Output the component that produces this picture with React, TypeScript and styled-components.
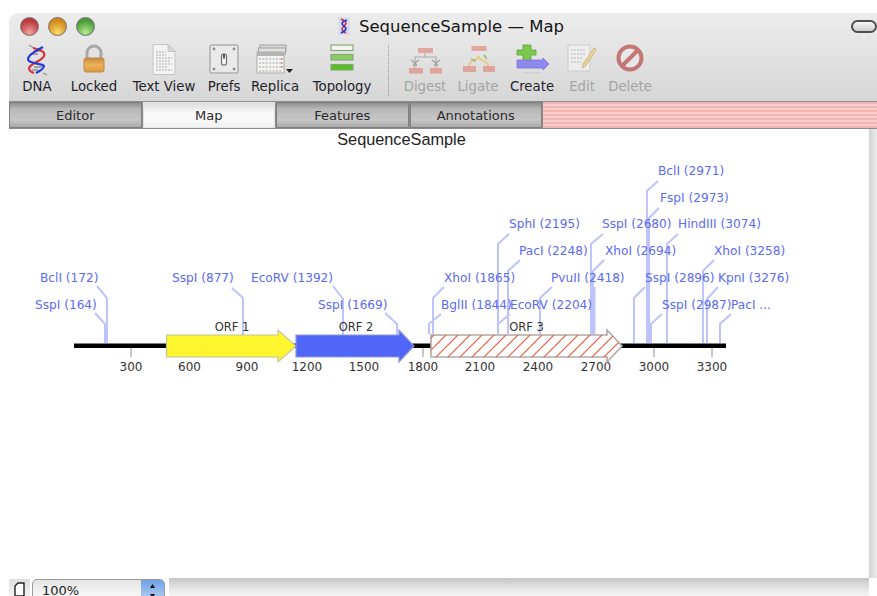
import React from "react";
import styled, { createGlobalStyle } from "styled-components";

const UI_FONT = `"DejaVu Sans", "Noto Sans", sans-serif`;

const GlobalStyle = createGlobalStyle`
  html, body {
    margin: 0;
    padding: 0;
    background: #fff;
  }
`;

const Page = styled.div`
  width: 877px;
  height: 596px;
  padding: 13px 0 0 9px;
  box-sizing: border-box;
  overflow: hidden;
  background: #fff;
  font-family: ${UI_FONT};
`;

const Window = styled.div`
  height: 583px;
  display: flex;
  flex-direction: column;
  border-top-left-radius: 9px;
  overflow: hidden;
`;

const TitleBar = styled.div`
  height: 29px;
  padding-bottom: 3px;
  box-sizing: border-box;
  display: grid;
  grid-template-columns: 86px 1fr 26px;
  align-items: center;
  background: linear-gradient(#ececec, #e6e6e6);
`;

const Lights = styled.div`
  display: flex;
  gap: 9px;
  padding-left: 11px;
`;

const Light = styled.span<{ $hue: string; $glow: string }>`
  width: 19px;
  height: 19px;
  border-radius: 50%;
  box-sizing: border-box;
  border: 1px solid #77706c;
  background: radial-gradient(circle at 50% 85%, ${(p) => p.$glow}, ${(p) => p.$hue} 70%);
`;

const Title = styled.div`
  display: flex;
  align-items: center;
  justify-content: center;
  gap: 9px;
  padding-right: 44px;
  font-size: 16.5px;
  color: #151515;
  white-space: nowrap;
`;

const ZoomPill = styled.span`
  height: 13px;
  border: 2px solid #4e4e4e;
  border-radius: 7px;
  box-sizing: border-box;
  background: linear-gradient(#f6f6f6, #cfcfcf);
`;

const Toolbar = styled.div`
  height: 59px;
  display: flex;
  padding-left: 5px;
  background: linear-gradient(#e6e6e6, #d6d6d6);
  border-bottom: 1px solid #8e8e8e;
  box-sizing: content-box;
`;

const ToolItem = styled.div<{ $width: number; $dim?: boolean }>`
  width: ${(p) => p.$width}px;
  display: flex;
  flex-direction: column;
  align-items: center;
  font-size: 13.3px;
  color: ${(p) => (p.$dim ? "#a4a4a4" : "#1f1f2a")};
  white-space: nowrap;
`;

const ToolIcon = styled.div<{ $dim?: boolean }>`
  height: 36px;
  padding-top: 2px;
  box-sizing: border-box;
  opacity: ${(p) => (p.$dim ? 0.6 : 1)};
`;

const ToolLabel = styled.span`
  line-height: 18px;
`;

const ToolDivider = styled.div`
  width: 0;
  margin: 3px 6px 5px;
  border-left: 1px dotted #9a9a9a;
`;

const TabRow = styled.div`
  height: 26px;
  display: flex;
  gap: 1px;
  background: #8c8c8c;
  border-bottom: 1px solid #8c8c8c;
  box-sizing: content-box;
`;

const Tab = styled.div<{ $active?: boolean }>`
  width: 132.5px;
  display: flex;
  align-items: center;
  justify-content: center;
  font-size: 13px;
  color: #2a2a2a;
  box-sizing: border-box;
  border: 1px solid ${(p) => (p.$active ? "#e4e4e4" : "#7f7f7f")};
  background: ${(p) =>
    p.$active
      ? "linear-gradient(#dcdcdc, #fbfbfb 45%, #f2f2f2)"
      : "linear-gradient(#8f8f8f, #b8b8b8 25%, #c6c6c6 70%, #a9a9a9)"};
`;

const TabFiller = styled.div`
  flex: 1;
  background: repeating-linear-gradient(#f3b4b4 0 2px, #f9cdcd 2px 4px);
`;

const Body = styled.div`
  flex: 1;
  display: flex;
  min-height: 0;
`;

const Canvas = styled.div`
  flex: 1;
  background: #fff;
`;

const MapSvg = styled.svg`
  display: block;
`;

const ScrollTrack = styled.div`
  width: 8px;
  background: linear-gradient(90deg, #d2d2d2, #ececec);
`;

const Footer = styled.div`
  height: 18px;
  display: flex;
  background: #fff;
`;

const PageButton = styled.div`
  width: 21px;
  height: 18px;
  margin-top: 1px;
  display: flex;
  justify-content: center;
  padding-top: 3px;
  box-sizing: border-box;
  background: linear-gradient(#dedede, #f4f4f4);
`;

const ZoomSelect = styled.div`
  width: 133px;
  height: 24px;
  margin: 1px 0 0 2px;
  display: flex;
  box-sizing: border-box;
  border: 1px solid #9c9c9c;
  border-radius: 5px;
  overflow: hidden;
  background: linear-gradient(#e4e4e4, #ffffff);
`;

const ZoomValue = styled.span`
  flex: 1;
  padding: 3px 0 0 9px;
  font-size: 13px;
  color: #222;
`;

const ZoomStepper = styled.span`
  width: 23px;
  display: flex;
  justify-content: center;
  padding-top: 3px;
  box-sizing: border-box;
  background: linear-gradient(#6f9fe6, #bcd6f5);
`;

const HScrollTrack = styled.div`
  flex: 1;
  margin-left: 4px;
  background: linear-gradient(#c4c4c4, #e6e6e6 60%, #f6f6f6);
`;

const CornerGap = styled.div`
  width: 8px;
`;

const DnaIcon = () => (
  <svg width="22" height="32" viewBox="0 0 22 32">
    <path d="M3 1l5 3M17 29l4 2M8 7h8M6 10h6M8 23h8M6 26h6" stroke="#8f8f8f" strokeWidth="1.3" />
    <path d="M7 4C12 5 20 7 18 12S5 19 3 24c0 2 2 4 5 5" fill="none" stroke="#d8323a" strokeWidth="2.1" />
    <path d="M17 3C12 6 2 10 2 15s14 4 16 7c0 3-4 5-8 7" fill="none" stroke="#2438d8" strokeWidth="2.1" />
  </svg>
);

const LockIcon = () => (
  <svg width="22" height="29" viewBox="0 0 22 29">
    <defs>
      <linearGradient id="lockBody" x1="0" y1="0" x2="0" y2="1">
        <stop offset="0" stopColor="#c98a3a" />
        <stop offset="0.5" stopColor="#eeb25c" />
        <stop offset="1" stopColor="#d9983f" />
      </linearGradient>
    </defs>
    <path d="M4 14V9a7 7 0 0 1 14 0v5" fill="none" stroke="#a8a8a8" strokeWidth="3" />
    <rect x="1" y="14" width="20" height="14" rx="2" fill="url(#lockBody)" stroke="#c08a48" />
  </svg>
);

const TextDocIcon = () => (
  <svg width="24" height="31" viewBox="0 0 24 31">
    <path d="M1 .5h15l7 7v23H1z" fill="#f3f3f3" stroke="#c4c4c4" />
    <path d="M16 .5v7h7z" fill="#d6d6d6" stroke="#c4c4c4" />
    <path
      d="M4 8h10M4 11h10M4 14h16M4 17h14M4 20h16M4 23h12M4 26h16"
      stroke="#ababab"
      strokeDasharray="2 1"
    />
  </svg>
);

const PrefsIcon = () => (
  <svg width="30" height="30" viewBox="0 0 30 30">
    <rect x="1" y="1" width="28" height="28" rx="2" fill="#e9e9e9" stroke="#b0b0b0" strokeWidth="1.6" />
    <g fill="#8d8d8d">
      <circle cx="5" cy="5" r="1.400" />
      <circle cx="25" cy="5" r="1.400" />
      <circle cx="5" cy="25" r="1.400" />
      <circle cx="25" cy="25" r="1.400" />
    </g>
    <rect x="12.500" y="10" width="5" height="11" rx="2" fill="#f6f6f6" stroke="#6e6e6e" strokeWidth="1.2" />
    <rect x="14" y="10" width="2" height="4.500" fill="#555" />
  </svg>
);

const ReplicaIcon = () => (
  <svg width="38" height="30" viewBox="0 0 38 30">
    <rect x="4" y="1" width="26" height="6" fill="#d6d6d6" stroke="#a2a2a2" />
    <rect x="2.500" y="4" width="27" height="6" fill="#e0e0e0" stroke="#a2a2a2" />
    <rect x="1" y="8" width="27" height="21" fill="#f4f4ea" stroke="#ababab" />
    <rect x="1" y="8" width="27" height="4" fill="#b4b4b4" />
    <path d="M3 15h23M3 19h23M3 23h23M3 27h23" stroke="#9aa0d4" strokeDasharray="2 1.400" />
    <path d="M25 15h2M25 19h2M25 23h2" stroke="#d06a6a" />
    <path d="M30 25h7l-3.500 4z" fill="#222" />
  </svg>
);

const TopologyIcon = () => (
  <svg width="24" height="28" viewBox="0 0 24 28">
    <rect x="1" y="1" width="22" height="5.500" fill="#f6f8f0" stroke="#86a876" strokeWidth="1.2" />
    <rect x="1" y="10.500" width="22" height="5.500" fill="#8ccc66" stroke="#86a876" strokeWidth="1.2" />
    <rect x="1" y="20.500" width="22" height="5.500" fill="#55c022" stroke="#86a876" strokeWidth="1.2" />
  </svg>
);

const DigestIcon = () => (
  <svg width="33" height="32" viewBox="0 0 33 32">
    <g fill="#e07f6e">
      <rect x="9" y="4" width="15" height="5" />
      <rect x="0" y="24" width="14" height="5.500" />
      <rect x="21" y="24" width="12" height="5.500" />
    </g>
    <path d="M16 9v4M6 24v-11h21v11" fill="none" stroke="#8a8a8a" strokeWidth="1.1" />
    <path d="M2 16l4 3 4-3M23 16l4 3 4-3M4 22l2-3 2 3M25 22l2-3 2 3" fill="none" stroke="#7a7a7a" strokeWidth="1.3" />
  </svg>
);

const LigateIcon = () => (
  <svg width="33" height="30" viewBox="0 0 33 30">
    <g fill="#e07f6e">
      <rect x="9.500" y="2" width="15" height="5" />
      <rect x="1" y="22" width="13" height="6" />
      <rect x="21" y="22" width="12" height="6" />
    </g>
    <path d="M7 22c0-7 9-5 10-10M26 22c0-7-9-4-10-10" fill="none" stroke="#e8c04a" strokeWidth="2.200" />
    <path d="M9 15l5 2M22 11l3 4" stroke="#5aa84a" strokeWidth="1.800" />
  </svg>
);

const CreateIcon = () => (
  <svg width="34" height="30" viewBox="0 0 34 30">
    <path d="M8 1h8v5h5v5h-5v6H8v-6H2V6h6z" fill="#7cc84e" stroke="#5aa436" strokeWidth="0.800" />
    <path d="M2 16h26v-2l6 6-6 6v-2H2z" fill="#8f88ee" stroke="#7a74d4" strokeWidth="0.800" />
    <rect x="8" y="28" width="17" height="1.500" fill="#cfcfcf" />
  </svg>
);

const EditIcon = () => (
  <svg width="31" height="28" viewBox="0 0 31 28">
    <path d="M1 1h22v26H1z" fill="#f6f6f6" stroke="#bbb" />
    <path d="M4 6h14M4 10h14M4 14h12M4 18h10" stroke="#999" strokeDasharray="2 1" />
    <path d="M27 4l2.500 1.500-11 16.500-3 2 .5-4z" fill="#f0c860" stroke="#b89238" strokeWidth="0.800" />
  </svg>
);

const DeleteIcon = () => (
  <svg width="28" height="28" viewBox="0 0 28 28">
    <circle cx="14" cy="14" r="11.500" fill="#ececec" stroke="#b03030" strokeWidth="4" />
    <path d="M6 22L22 6" stroke="#b03030" strokeWidth="4" />
  </svg>
);

const TITLE_DNA = (
  <svg width="12" height="18" viewBox="0 0 12 18">
    <rect width="12" height="18" fill="#d9dcec" />
    <path d="M3 2c6 3 6 4 3 7s-3 4 2 7" fill="none" stroke="#d8323a" strokeWidth="1.600" />
    <path d="M9 3C3 5 3 7 6 9s3 4-3 7" fill="none" stroke="#2438d8" strokeWidth="1.600" />
  </svg>
);

const PRIMARY_TOOLS = [
  { label: "DNA", width: 46, Icon: DnaIcon },
  { label: "Locked", width: 68, Icon: LockIcon },
  { label: "Text View", width: 72, Icon: TextDocIcon },
  { label: "Prefs", width: 48, Icon: PrefsIcon },
  { label: "Replica", width: 54, Icon: ReplicaIcon },
  { label: "Topology", width: 80, Icon: TopologyIcon },
];

const EDIT_TOOLS = [
  { label: "Digest", width: 60, Icon: DigestIcon, dim: true },
  { label: "Ligate", width: 46, Icon: LigateIcon, dim: true },
  { label: "Create", width: 62, Icon: CreateIcon, dim: false },
  { label: "Edit", width: 38, Icon: EditIcon, dim: true },
  { label: "Delete", width: 58, Icon: DeleteIcon, dim: true },
];

const TABS = ["Editor", "Map", "Features", "Annotations"];

// name, label start x, label baseline y, leader line points
const SITES: [string, number, number, string][] = [
  ["BclI (172)", 40, 281, "97,285 107,297 107,342"],
  ["SspI (164)", 35, 308, "95,312 105,323 105,342"],
  ["SspI (877)", 172, 281, "232,287 243,297 243,334"],
  ["EcoRV (1392)", 251, 281, "333,285 343,298 343,334"],
  ["SspI (1669)", 318, 308, "385,312 397,323 397,334"],
  ["BclI (2971)", 658, 174, "658,180 647,190 647,342"],
  ["FspI (2973)", 660, 201, "659,207 649,217 649,342"],
  ["SphI (2195)", 509, 227, "509,233 498,243 498,333"],
  ["SspI (2680)", 602, 227, "603,233 591,243 591,333"],
  ["HindIII (3074)", 678, 227, "678,233 667,243 667,342"],
  ["PacI (2248)", 519, 254, "520,259 508,270 508,333"],
  ["XhoI (2694)", 605, 254, "604,259 593,270 593,333"],
  ["XhoI (3258)", 714, 254, "714,259 703,270 703,342"],
  ["XhoI (1865)", 444, 281, "444,286 433,297 433,333"],
  ["PvuII (2418)", 551, 281, "552,286 540,297 540,333"],
  ["SspI (2896)", 645, 281, "645,286 634,297 634,342"],
  ["KpnI (3276)", 718, 281, "718,286 707,298 707,342"],
  ["BglII (1844)", 441, 308, "441,313 429,323 429,333"],
  ["EcoRV (2204)", 510, 308, "510,313 498,323 498,333"],
  ["SspI (2987)", 662, 308, "662,313 651,323 651,342"],
  ["PacI ...", 731, 308, "731,313 720,323 720,342"],
];

const TICKS: [string, number][] = [
  ["300", 131],
  ["600", 189.5],
  ["900", 247],
  ["1200", 307],
  ["1500", 364],
  ["1800", 423],
  ["2100", 480],
  ["2400", 538],
  ["2700", 596],
  ["3000", 654],
  ["3300", 712],
];

// arrow from x0 to tip, with the head starting at neck
const arrowPoints = (x0: number, neck: number, tip: number) =>
  `${x0},334 ${neck},334 ${neck},329 ${tip},345 ${neck},361 ${neck},356 ${x0},356`;

const SequenceMap = () => (
  <MapSvg width="860" height="450" viewBox="9 128 860 450">
    <defs>
      <pattern id="orfHatch" width="12" height="12" patternUnits="userSpaceOnUse">
        <path d="M-1 13L13 -1" stroke="#ec5a40" strokeWidth="1.2" />
        <path d="M-4 4L4 -4M8 16L16 8" stroke="#ec5a40" strokeWidth="1.2" />
      </pattern>
    </defs>

    <text x="401.500" y="143.500" textAnchor="middle" fontFamily="Liberation Sans, sans-serif" fontSize="16.300" fill="#222">
      SequenceSample
    </text>

    <rect x="74" y="342.500" width="652" height="4.500" fill="#000" />

    <g stroke="#b5b5b5" strokeWidth="1.5">
      {TICKS.map(([, x]) => (
        <line key={x} x1={x} y1="347" x2={x} y2="356" />
      ))}
    </g>

    <g fontFamily="DejaVu Sans, sans-serif" fontSize="12" fill="#333" textAnchor="middle">
      {TICKS.map(([label, x]) => (
        <text key={label} x={x} y="369.500">
          {label}
        </text>
      ))}
    </g>

    <g fill="none" stroke="#bcc4fb" strokeWidth="2">
      {SITES.map(([name, , , leader]) => (
        <polyline key={name} points={leader} />
      ))}
      <path d="M594.500 286v47" />
    </g>

    <polygon points={arrowPoints(166.500, 278, 296)} fill="#fdf52e" stroke="#c4c4a0" strokeWidth="1.2" />
    <polygon points={arrowPoints(296, 399, 414)} fill="#4f66f7" stroke="#8d98d8" strokeWidth="1.2" />
    <polygon points={arrowPoints(431, 607, 622)} fill="#fff" stroke="#b0aaa6" strokeWidth="1.6" />
    <polygon points={arrowPoints(431, 607, 622)} fill="url(#orfHatch)" stroke="none" />

    <g fontFamily="DejaVu Sans, sans-serif" fontSize="11.500" fill="#333" textAnchor="middle">
      <text x="232" y="330">ORF 1</text>
      <text x="356" y="330">ORF 2</text>
      <text x="526.500" y="330">ORF 3</text>
    </g>

    <g fontFamily="DejaVu Sans, sans-serif" fontSize="12.150" fill="#5a6bf5">
      {SITES.map(([name, x, y]) => (
        <text key={name} x={x} y={y}>
          {name}
        </text>
      ))}
    </g>
  </MapSvg>
);

export default function App() {
  return (
    <Page>
      <GlobalStyle />
      <Window>
        <TitleBar>
          <Lights>
            <Light $hue="#b8383c" $glow="#f5a0a0" />
            <Light $hue="#d08a1c" $glow="#fbdc6a" />
            <Light $hue="#4c9a3a" $glow="#b4ec94" />
          </Lights>
          <Title>
            {TITLE_DNA}
            SequenceSample — Map
          </Title>
          <ZoomPill />
        </TitleBar>

        <Toolbar>
          {PRIMARY_TOOLS.map(({ label, width, Icon }) => (
            <ToolItem key={label} $width={width}>
              <ToolIcon>
                <Icon />
              </ToolIcon>
              <ToolLabel>{label}</ToolLabel>
            </ToolItem>
          ))}
          <ToolDivider />
          {EDIT_TOOLS.map(({ label, width, Icon, dim }) => (
            <ToolItem key={label} $width={width} $dim={dim}>
              <ToolIcon $dim={dim}>
                <Icon />
              </ToolIcon>
              <ToolLabel>{label}</ToolLabel>
            </ToolItem>
          ))}
        </Toolbar>

        <TabRow>
          {TABS.map((tab) => (
            <Tab key={tab} $active={tab === "Map"}>
              {tab}
            </Tab>
          ))}
          <TabFiller />
        </TabRow>

        <Body>
          <Canvas>
            <SequenceMap />
          </Canvas>
          <ScrollTrack />
        </Body>

        <Footer>
          <PageButton>
            <svg width="11" height="15" viewBox="0 0 11 15">
              <path d="M1 14V4l3-3h6v13z" fill="#fff" stroke="#222" strokeWidth="1.4" />
            </svg>
          </PageButton>
          <ZoomSelect>
            <ZoomValue>100%</ZoomValue>
            <ZoomStepper>
              <svg width="7" height="16" viewBox="0 0 7 16">
                <path d="M3.500 1L6 5H1zM3.500 15L1 11h5z" fill="#111" />
              </svg>
            </ZoomStepper>
          </ZoomSelect>
          <HScrollTrack />
          <CornerGap />
        </Footer>
      </Window>
    </Page>
  );
}
